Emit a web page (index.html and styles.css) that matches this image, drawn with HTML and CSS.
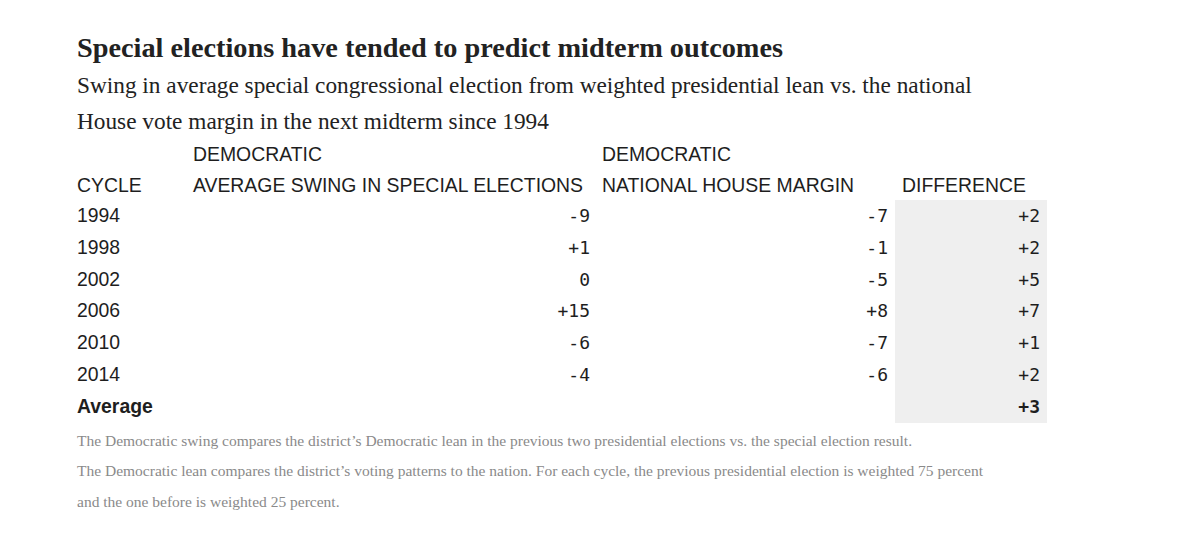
FILE: index.html
```html
<!DOCTYPE html>
<html>
<head>
<meta charset="utf-8">
<link rel="stylesheet" href="styles.css">
</head>
<body>
<div class="chart">
  <h1 class="title">Special elections have tended to predict midterm outcomes</h1>
  <p class="subtitle">Swing in average special congressional election from weighted presidential lean vs. the national<br>House vote margin in the next midterm since 1994</p>
  <div class="table">
    <div class="th">CYCLE</div>
    <div class="th">DEMOCRATIC<br>AVERAGE SWING IN SPECIAL ELECTIONS</div>
    <div class="th">DEMOCRATIC<br>NATIONAL HOUSE MARGIN</div>
    <div class="th diffh">DIFFERENCE</div>

    <div class="year">1994</div><div class="num c2">-9</div><div class="num c3">-7</div><div class="num diff">+2</div>
    <div class="year">1998</div><div class="num c2">+1</div><div class="num c3">-1</div><div class="num diff">+2</div>
    <div class="year">2002</div><div class="num c2">0</div><div class="num c3">-5</div><div class="num diff">+5</div>
    <div class="year">2006</div><div class="num c2">+15</div><div class="num c3">+8</div><div class="num diff">+7</div>
    <div class="year">2010</div><div class="num c2">-6</div><div class="num c3">-7</div><div class="num diff">+1</div>
    <div class="year">2014</div><div class="num c2">-4</div><div class="num c3">-6</div><div class="num diff">+2</div>
    <div class="year avg">Average</div><div class="num c2"></div><div class="num c3"></div><div class="num diff avgnum">+3</div>
  </div>
  <p class="note first">The Democratic swing compares the district’s Democratic lean in the previous two presidential elections vs. the special election result.</p>
  <p class="note">The Democratic lean compares the district’s voting patterns to the nation. For each cycle, the previous presidential election is weighted 75 percent<br>and the one before is weighted 25 percent.</p>
</div>
</body>
</html>
```
FILE: styles.css
```css
html, body {
  margin: 0;
  padding: 0;
  background: #ffffff;
}
.chart {
  padding: 32px 0 0 77px;
  color: #222222;
}
.title {
  margin: 0;
  font-family: "Liberation Serif", "Times New Roman", serif;
  font-weight: bold;
  font-size: 28.3px;
  line-height: 32px;
  color: #222222;
  white-space: nowrap;
}
.subtitle {
  margin: 3px 0 0 0;
  font-family: "Liberation Serif", "Times New Roman", serif;
  font-size: 23.3px;
  line-height: 36px;
  color: #222222;
  white-space: nowrap;
}
.table {
  display: grid;
  grid-template-columns: 116px 409px 293px 152px;
  grid-template-rows: 61px;
  grid-auto-rows: 31.8px;
  font-family: "Liberation Sans", Arial, sans-serif;
  font-size: 19.4px;
  color: #1e1e1e;
}
.th {
  align-self: end;
  line-height: 30.5px;
  white-space: nowrap;
}
.diffh {
  padding-left: 7px;
}
.year {
  line-height: 31.8px;
}
.avg {
  font-weight: bold;
}
.num {
  font-family: "DejaVu Sans Mono", monospace;
  font-size: 18px;
  line-height: 31.8px;
  text-align: right;
  color: #1e1e1e;
}
.c2 {
  padding-right: 12px;
}
.c3 {
  padding-right: 7px;
}
.diff {
  background: #efefef;
  padding-right: 7px;
}
.avgnum {
  font-weight: bold;
}
.note {
  margin: 0;
  font-family: "Liberation Serif", "Times New Roman", serif;
  font-size: 15.5px;
  line-height: 30.5px;
  color: #8a8a8a;
  white-space: nowrap;
}
.note.first {
  margin-top: 3px;
}
```
